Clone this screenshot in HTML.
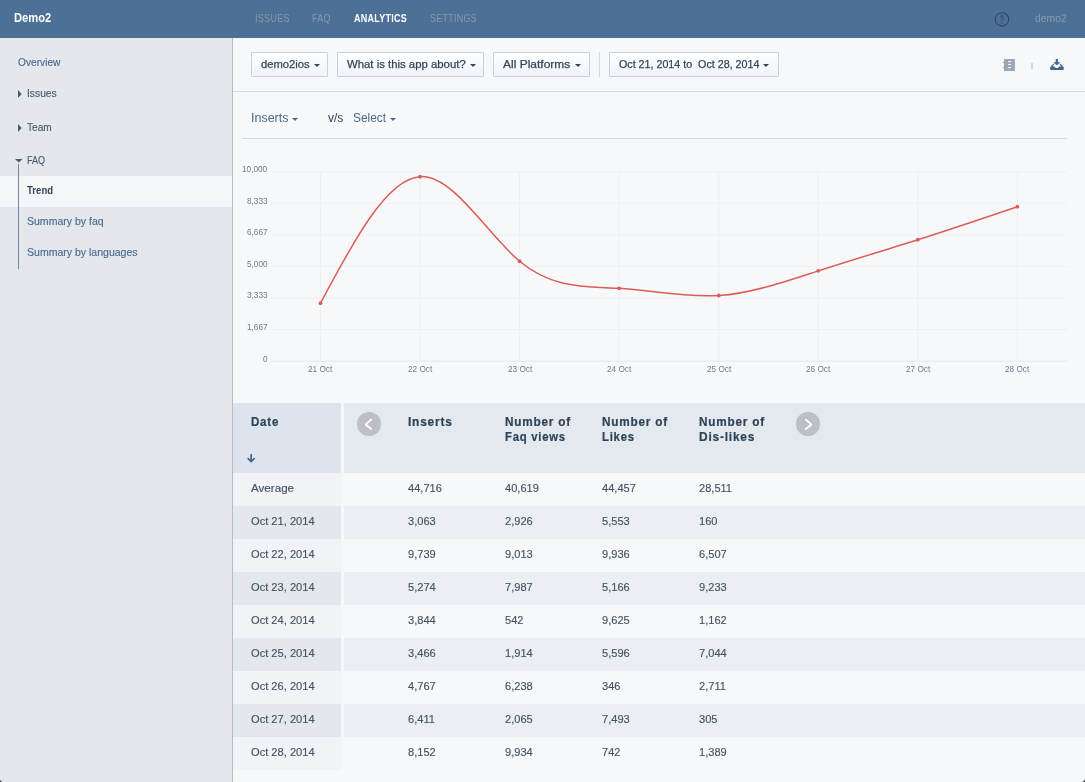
<!DOCTYPE html>
<html><head><meta charset="utf-8"><title>Demo2 Analytics</title>
<style>
html,body{margin:0;padding:0;}
body{width:1085px;height:782px;position:relative;overflow:hidden;background:#1d3148;font-family:"Liberation Sans", sans-serif;}
#app{position:absolute;left:0;top:0;width:1085px;height:782px;overflow:hidden;background:#f7f8fa;border-radius:0 0 4px 4px;}
.b{position:absolute;display:block;}
.t{position:absolute;display:block;white-space:pre;line-height:1;transform-origin:0 50%;}
.btn{position:absolute;box-sizing:border-box;border:1px solid #c8d1dc;background:linear-gradient(#fdfeff,#f1f4f7);top:52px;height:25px;border-radius:1px;}
</style></head><body>
<div id="app">
<div class="b" style="left:0;top:0;width:1085px;height:37.6px;background:#4d7096"></div>
<div class="b" style="left:0;top:37.6px;width:232px;height:745px;background:#e4e8ed"></div>
<div class="b" style="left:231.8px;top:37.6px;width:1.2px;height:745px;background:#b7bdc6"></div>
<div class="b" style="left:0;top:175.9px;width:231.8px;height:30.7px;background:#f4f6f9"></div>
<div class="b" style="left:18px;top:164px;width:1px;height:104.8px;background:#76859a"></div>
<div class="b" style="left:233px;top:91px;width:852px;height:1.2px;background:#d5dbe3"></div>
<div class="btn" style="left:251px;width:77px"></div>
<div class="btn" style="left:337px;width:147px"></div>
<div class="btn" style="left:493.2px;width:96.6px"></div>
<div class="btn" style="left:609.2px;width:169.8px"></div>
<div class="b" style="left:599px;top:52.4px;width:1px;height:24.2px;background:#d5dbe3"></div>
<div class="b" style="left:242px;top:137.8px;width:825.3px;height:1px;background:#d3d9e1"></div>
<svg class="b" style="left:0;top:0" width="1085" height="400" viewBox="0 0 1085 400"><line x1="270.5" x2="1067.3" y1="171.70" y2="171.70" stroke="#eef0f3" stroke-width="1"/><line x1="270.5" x2="1067.3" y1="203.28" y2="203.28" stroke="#eef0f3" stroke-width="1"/><line x1="270.5" x2="1067.3" y1="234.87" y2="234.87" stroke="#eef0f3" stroke-width="1"/><line x1="270.5" x2="1067.3" y1="266.45" y2="266.45" stroke="#eef0f3" stroke-width="1"/><line x1="270.5" x2="1067.3" y1="298.03" y2="298.03" stroke="#eef0f3" stroke-width="1"/><line x1="270.5" x2="1067.3" y1="329.62" y2="329.62" stroke="#eef0f3" stroke-width="1"/><line x1="270.5" x2="1067.3" y1="361.20" y2="361.20" stroke="#e3e7ec" stroke-width="1"/><line x1="320.50" x2="320.50" y1="171.70" y2="361.20" stroke="#eef0f3" stroke-width="1"/><line x1="420.06" x2="420.06" y1="171.70" y2="361.20" stroke="#eef0f3" stroke-width="1"/><line x1="519.61" x2="519.61" y1="171.70" y2="361.20" stroke="#eef0f3" stroke-width="1"/><line x1="619.17" x2="619.17" y1="171.70" y2="361.20" stroke="#eef0f3" stroke-width="1"/><line x1="718.73" x2="718.73" y1="171.70" y2="361.20" stroke="#eef0f3" stroke-width="1"/><line x1="818.29" x2="818.29" y1="171.70" y2="361.20" stroke="#eef0f3" stroke-width="1"/><line x1="917.84" x2="917.84" y1="171.70" y2="361.20" stroke="#eef0f3" stroke-width="1"/><line x1="1017.40" x2="1017.40" y1="171.70" y2="361.20" stroke="#eef0f3" stroke-width="1"/><path d="M320.50,303.16C353.69,240.83,386.87,178.50,420.06,176.65C453.24,174.79,486.43,233.41,519.61,261.26C552.80,289.11,585.99,286.20,619.17,288.36C652.36,290.51,685.54,297.74,718.73,295.52C751.91,293.30,785.10,281.63,818.29,270.87C851.47,260.10,884.66,250.25,917.84,239.71C951.03,229.17,984.21,217.95,1017.40,206.72" fill="none" stroke="#da5d58" stroke-width="1.5"/><circle cx="320.50" cy="303.16" r="1.9" fill="#da5d58"/><circle cx="420.06" cy="176.65" r="1.9" fill="#da5d58"/><circle cx="519.61" cy="261.26" r="1.9" fill="#da5d58"/><circle cx="619.17" cy="288.36" r="1.9" fill="#da5d58"/><circle cx="718.73" cy="295.52" r="1.9" fill="#da5d58"/><circle cx="818.29" cy="270.87" r="1.9" fill="#da5d58"/><circle cx="917.84" cy="239.71" r="1.9" fill="#da5d58"/><circle cx="1017.40" cy="206.72" r="1.9" fill="#da5d58"/></svg>
<div class="b" style="left:233px;top:403px;width:108px;height:70px;background:#dde4ed"></div>
<div class="b" style="left:344px;top:403px;width:741px;height:70px;background:#e4e9f0"></div>
<div class="b" style="left:233px;top:473.00px;width:108px;height:32.97px;background:#f1f3f6"></div><div class="b" style="left:233px;top:505.97px;width:108px;height:32.97px;background:#e4e7ec"></div><div class="b" style="left:344px;top:505.97px;width:741px;height:32.97px;background:#ebeef3"></div><div class="b" style="left:233px;top:538.94px;width:108px;height:32.97px;background:#f1f3f6"></div><div class="b" style="left:233px;top:571.91px;width:108px;height:32.97px;background:#e4e7ec"></div><div class="b" style="left:344px;top:571.91px;width:741px;height:32.97px;background:#ebeef3"></div><div class="b" style="left:233px;top:604.88px;width:108px;height:32.97px;background:#f1f3f6"></div><div class="b" style="left:233px;top:637.85px;width:108px;height:32.97px;background:#e4e7ec"></div><div class="b" style="left:344px;top:637.85px;width:741px;height:32.97px;background:#ebeef3"></div><div class="b" style="left:233px;top:670.82px;width:108px;height:32.97px;background:#f1f3f6"></div><div class="b" style="left:233px;top:703.79px;width:108px;height:32.97px;background:#e4e7ec"></div><div class="b" style="left:344px;top:703.79px;width:741px;height:32.97px;background:#ebeef3"></div><div class="b" style="left:233px;top:736.76px;width:108px;height:32.97px;background:#f1f3f6"></div>
<svg class="b" style="left:18px;top:90.1px" width="4" height="8" viewBox="0 0 4 8"><path d="M0 0L3.6 4L0 8Z" fill="#4b5a6b"/></svg><svg class="b" style="left:18px;top:123.9px" width="4" height="8" viewBox="0 0 4 8"><path d="M0 0L3.6 4L0 8Z" fill="#4b5a6b"/></svg><svg class="b" style="left:14.6px;top:159px" width="8" height="4" viewBox="0 0 8 4"><path d="M0 0H7.6L3.8 3.4Z" fill="#4b5a6b"/></svg><svg class="b" style="left:314.3px;top:64.0px" width="6" height="3" viewBox="0 0 6 3"><path d="M0 0H6L3.0 3Z" fill="#34465c"/></svg><svg class="b" style="left:470.4px;top:64.0px" width="6" height="3" viewBox="0 0 6 3"><path d="M0 0H6L3.0 3Z" fill="#34465c"/></svg><svg class="b" style="left:575.3px;top:64.0px" width="6" height="3" viewBox="0 0 6 3"><path d="M0 0H6L3.0 3Z" fill="#34465c"/></svg><svg class="b" style="left:763.2px;top:64.0px" width="6" height="3" viewBox="0 0 6 3"><path d="M0 0H6L3.0 3Z" fill="#34465c"/></svg><svg class="b" style="left:292.4px;top:118.2px" width="6" height="3" viewBox="0 0 6 3"><path d="M0 0H6L3.0 3Z" fill="#4a6a8e"/></svg><svg class="b" style="left:390.4px;top:118.2px" width="6" height="3" viewBox="0 0 6 3"><path d="M0 0H6L3.0 3Z" fill="#4a6a8e"/></svg>
<svg class="b" style="left:993px;top:10px" width="18" height="19" viewBox="0 0 18 19"><circle cx="8.95" cy="9.4" r="6.7" fill="none" stroke="#34475d" stroke-width="1.1"/></svg><svg class="b" style="left:1002px;top:58px" width="14" height="14" viewBox="0 0 14 14"><path d="M2 1H12.9V12.9H2V10.1H0.9V9.1H2V5.1H0.9V4.1H2Z" fill="#9ca7b6"/><path d="M6.1 3.6H9.1M6.1 6.5H9.1M6.1 9.6H9.1" stroke="#f7f8fa" stroke-width="1"/></svg><div class="b" style="left:1031px;top:63px;width:2px;height:5.8px;background:#ced7e2"></div><svg class="b" style="left:1050px;top:59px" width="14" height="11" viewBox="0 0 14 11"><path d="M5.7 0H7.9V3.2H10.4L6.8 6.3L3.3 3.2H5.7Z" fill="#3f6792"/><path d="M0.2 8.2L3.3 4.7H4.6L2.5 7.5H4.7L5.6 8.9H8.1L9 7.5H11.2L9.1 4.7H10.4L13.7 8.2V10.3Q13.7 11 13 11H0.9Q0.2 11 0.2 10.3Z" fill="#3f6792"/></svg><svg class="b" style="left:356.0px;top:410.85px" width="26" height="26" viewBox="0 0 26 26"><circle cx="13" cy="13" r="12" fill="#bcbfc5"/><path d="M15.2 8.6L9.6 13.4L15.2 18" fill="none" stroke="#fff" stroke-width="1.9" stroke-linecap="round" stroke-linejoin="round"/></svg><svg class="b" style="left:795.0px;top:410.85px" width="26" height="26" viewBox="0 0 26 26"><circle cx="13" cy="13" r="12" fill="#bcbfc5"/><path d="M10.8 8.6L16.4 13.4L10.8 18" fill="none" stroke="#fff" stroke-width="1.9" stroke-linecap="round" stroke-linejoin="round"/></svg><svg class="b" style="left:246px;top:453px" width="11" height="10" viewBox="0 0 11 10"><path d="M5.15 1V8.2M1.7 5.1L5.15 8.5L8.6 5.1" fill="none" stroke="#3f6792" stroke-width="1.7" stroke-linejoin="miter"/></svg>
<div class="b" style="left:0;top:0;width:1085px;height:782px;will-change:transform"><span class="t" style="left:13.80px;top:11.30px;font-size:13px;color:#ffffff;transform:scaleX(0.8603);font-weight:bold;">Demo2</span><span class="t" style="left:254.50px;top:13.21px;font-size:10.5px;color:#8799ae;transform:scaleX(0.8644);letter-spacing:0.3px;">ISSUES</span><span class="t" style="left:312.20px;top:13.21px;font-size:10.5px;color:#8799ae;transform:scaleX(0.8470);letter-spacing:0.3px;">FAQ</span><span class="t" style="left:353.50px;top:13.21px;font-size:10.5px;color:#ffffff;transform:scaleX(0.8565);font-weight:bold;letter-spacing:0.3px;">ANALYTICS</span><span class="t" style="left:429.50px;top:13.21px;font-size:10.5px;color:#8799ae;transform:scaleX(0.8534);letter-spacing:0.3px;">SETTINGS</span><span class="t" style="left:1035.30px;top:13.01px;font-size:10.5px;color:#8b9bb0;transform:scaleX(0.9904);">demo2</span><span class="t" style="left:1000.00px;top:13.74px;font-size:12px;color:#3a4c61;transform:scaleX(0.5311);font-weight:bold;">?</span><span class="t" style="left:18.40px;top:57.21px;font-size:10.5px;color:#4a6a8e;transform:scaleX(0.9688);-webkit-text-stroke:0.15px currentColor;">Overview</span><span class="t" style="left:27.40px;top:88.21px;font-size:10.5px;color:#4b5a6b;transform:scaleX(0.9783);-webkit-text-stroke:0.15px currentColor;">Issues</span><span class="t" style="left:27.40px;top:122.31px;font-size:10.5px;color:#4b5a6b;transform:scaleX(0.9655);-webkit-text-stroke:0.15px currentColor;">Team</span><span class="t" style="left:27.40px;top:155.01px;font-size:10.5px;color:#4b5a6b;transform:scaleX(0.8565);-webkit-text-stroke:0.15px currentColor;">FAQ</span><span class="t" style="left:27.40px;top:184.91px;font-size:10.5px;color:#34465c;transform:scaleX(0.9128);font-weight:bold;">Trend</span><span class="t" style="left:27.40px;top:215.91px;font-size:10.5px;color:#4a6a8e;transform:scaleX(1.0019);-webkit-text-stroke:0.15px currentColor;">Summary by faq</span><span class="t" style="left:27.40px;top:246.91px;font-size:10.5px;color:#4a6a8e;transform:scaleX(1.0026);-webkit-text-stroke:0.15px currentColor;">Summary by languages</span><span class="t" style="left:260.60px;top:58.59px;font-size:11px;color:#34465c;transform:scaleX(1.0188);-webkit-text-stroke:0.25px #34465c;">demo2ios</span><span class="t" style="left:347.10px;top:58.59px;font-size:11px;color:#34465c;transform:scaleX(1.0325);-webkit-text-stroke:0.25px #34465c;">What is this app about?</span><span class="t" style="left:503.30px;top:58.59px;font-size:11px;color:#34465c;transform:scaleX(1.0899);-webkit-text-stroke:0.25px #34465c;">All Platforms</span><span class="t" style="left:619.20px;top:58.59px;font-size:11px;color:#34465c;transform:scaleX(0.9728);-webkit-text-stroke:0.25px #34465c;">Oct 21, 2014 to  Oct 28, 2014</span><span class="t" style="left:250.80px;top:112.24px;font-size:12px;color:#4a6a8e;transform:scaleX(1.0412);">Inserts</span><span class="t" style="left:328.30px;top:112.24px;font-size:12px;color:#34465c;transform:scaleX(1.0037);">v/s</span><span class="t" style="left:353.30px;top:112.24px;font-size:12px;color:#4a6a8e;transform:scaleX(0.9892);">Select</span><span class="t" style="left:242.14px;top:165.11px;font-size:9.2px;color:#6f7b8b;transform:scaleX(0.8950);">10,000</span><span class="t" style="left:246.72px;top:196.70px;font-size:9.2px;color:#6f7b8b;transform:scaleX(0.8950);">8,333</span><span class="t" style="left:246.72px;top:228.28px;font-size:9.2px;color:#6f7b8b;transform:scaleX(0.8950);">6,667</span><span class="t" style="left:246.72px;top:259.86px;font-size:9.2px;color:#6f7b8b;transform:scaleX(0.8950);">5,000</span><span class="t" style="left:246.72px;top:291.45px;font-size:9.2px;color:#6f7b8b;transform:scaleX(0.8950);">3,333</span><span class="t" style="left:246.72px;top:323.03px;font-size:9.2px;color:#6f7b8b;transform:scaleX(0.8950);">1,667</span><span class="t" style="left:262.71px;top:354.61px;font-size:9.2px;color:#6f7b8b;transform:scaleX(0.8950);">0</span><span class="t" style="left:308.38px;top:364.51px;font-size:9.2px;color:#6f7b8b;transform:scaleX(0.8950);">21 Oct</span><span class="t" style="left:407.94px;top:364.51px;font-size:9.2px;color:#6f7b8b;transform:scaleX(0.8950);">22 Oct</span><span class="t" style="left:507.50px;top:364.51px;font-size:9.2px;color:#6f7b8b;transform:scaleX(0.8950);">23 Oct</span><span class="t" style="left:607.05px;top:364.51px;font-size:9.2px;color:#6f7b8b;transform:scaleX(0.8950);">24 Oct</span><span class="t" style="left:706.61px;top:364.51px;font-size:9.2px;color:#6f7b8b;transform:scaleX(0.8950);">25 Oct</span><span class="t" style="left:806.17px;top:364.51px;font-size:9.2px;color:#6f7b8b;transform:scaleX(0.8950);">26 Oct</span><span class="t" style="left:905.73px;top:364.51px;font-size:9.2px;color:#6f7b8b;transform:scaleX(0.8950);">27 Oct</span><span class="t" style="left:1005.28px;top:364.51px;font-size:9.2px;color:#6f7b8b;transform:scaleX(0.8950);">28 Oct</span><span class="t" style="left:250.80px;top:415.94px;font-size:12px;color:#2e4257;transform:scaleX(0.9606);font-weight:bold;letter-spacing:0.8px;-webkit-text-stroke:0.2px #2e4257;">Date</span><span class="t" style="left:407.70px;top:415.94px;font-size:12px;color:#2e4257;transform:scaleX(0.9920);font-weight:bold;letter-spacing:0.8px;-webkit-text-stroke:0.2px #2e4257;">Inserts</span><span class="t" style="left:504.70px;top:415.94px;font-size:12px;color:#2e4257;transform:scaleX(0.9819);font-weight:bold;letter-spacing:0.8px;-webkit-text-stroke:0.2px #2e4257;">Number of</span><span class="t" style="left:504.70px;top:430.74px;font-size:12px;color:#2e4257;transform:scaleX(0.9426);font-weight:bold;letter-spacing:0.8px;-webkit-text-stroke:0.2px #2e4257;">Faq views</span><span class="t" style="left:601.80px;top:415.94px;font-size:12px;color:#2e4257;transform:scaleX(0.9819);font-weight:bold;letter-spacing:0.8px;-webkit-text-stroke:0.2px #2e4257;">Number of</span><span class="t" style="left:601.80px;top:430.74px;font-size:12px;color:#2e4257;transform:scaleX(0.9473);font-weight:bold;letter-spacing:0.8px;-webkit-text-stroke:0.2px #2e4257;">Likes</span><span class="t" style="left:698.80px;top:415.94px;font-size:12px;color:#2e4257;transform:scaleX(0.9819);font-weight:bold;letter-spacing:0.8px;-webkit-text-stroke:0.2px #2e4257;">Number of</span><span class="t" style="left:698.80px;top:430.74px;font-size:12px;color:#2e4257;transform:scaleX(0.9935);font-weight:bold;letter-spacing:0.8px;-webkit-text-stroke:0.2px #2e4257;">Dis-likes</span><span class="t" style="left:250.90px;top:483.07px;font-size:11.5px;color:#465260;transform:scaleX(1.0108);-webkit-text-stroke:0.15px #465260;">Average</span><span class="t" style="left:407.70px;top:483.07px;font-size:11.5px;color:#465260;transform:scaleX(0.9620);-webkit-text-stroke:0.15px #465260;">44,716</span><span class="t" style="left:504.73px;top:483.07px;font-size:11.5px;color:#465260;transform:scaleX(0.9620);-webkit-text-stroke:0.15px #465260;">40,619</span><span class="t" style="left:601.76px;top:483.07px;font-size:11.5px;color:#465260;transform:scaleX(0.9620);-webkit-text-stroke:0.15px #465260;">44,457</span><span class="t" style="left:698.79px;top:483.07px;font-size:11.5px;color:#465260;transform:scaleX(0.9620);-webkit-text-stroke:0.15px #465260;">28,511</span><span class="t" style="left:250.90px;top:516.04px;font-size:11.5px;color:#465260;transform:scaleX(0.9657);-webkit-text-stroke:0.15px #465260;">Oct 21, 2014</span><span class="t" style="left:407.70px;top:516.04px;font-size:11.5px;color:#465260;transform:scaleX(0.9620);-webkit-text-stroke:0.15px #465260;">3,063</span><span class="t" style="left:504.73px;top:516.04px;font-size:11.5px;color:#465260;transform:scaleX(0.9620);-webkit-text-stroke:0.15px #465260;">2,926</span><span class="t" style="left:601.76px;top:516.04px;font-size:11.5px;color:#465260;transform:scaleX(0.9620);-webkit-text-stroke:0.15px #465260;">5,553</span><span class="t" style="left:698.79px;top:516.04px;font-size:11.5px;color:#465260;transform:scaleX(0.9620);-webkit-text-stroke:0.15px #465260;">160</span><span class="t" style="left:250.90px;top:549.01px;font-size:11.5px;color:#465260;transform:scaleX(0.9657);-webkit-text-stroke:0.15px #465260;">Oct 22, 2014</span><span class="t" style="left:407.70px;top:549.01px;font-size:11.5px;color:#465260;transform:scaleX(0.9620);-webkit-text-stroke:0.15px #465260;">9,739</span><span class="t" style="left:504.73px;top:549.01px;font-size:11.5px;color:#465260;transform:scaleX(0.9620);-webkit-text-stroke:0.15px #465260;">9,013</span><span class="t" style="left:601.76px;top:549.01px;font-size:11.5px;color:#465260;transform:scaleX(0.9620);-webkit-text-stroke:0.15px #465260;">9,936</span><span class="t" style="left:698.79px;top:549.01px;font-size:11.5px;color:#465260;transform:scaleX(0.9620);-webkit-text-stroke:0.15px #465260;">6,507</span><span class="t" style="left:250.90px;top:581.98px;font-size:11.5px;color:#465260;transform:scaleX(0.9657);-webkit-text-stroke:0.15px #465260;">Oct 23, 2014</span><span class="t" style="left:407.70px;top:581.98px;font-size:11.5px;color:#465260;transform:scaleX(0.9620);-webkit-text-stroke:0.15px #465260;">5,274</span><span class="t" style="left:504.73px;top:581.98px;font-size:11.5px;color:#465260;transform:scaleX(0.9620);-webkit-text-stroke:0.15px #465260;">7,987</span><span class="t" style="left:601.76px;top:581.98px;font-size:11.5px;color:#465260;transform:scaleX(0.9620);-webkit-text-stroke:0.15px #465260;">5,166</span><span class="t" style="left:698.79px;top:581.98px;font-size:11.5px;color:#465260;transform:scaleX(0.9620);-webkit-text-stroke:0.15px #465260;">9,233</span><span class="t" style="left:250.90px;top:614.95px;font-size:11.5px;color:#465260;transform:scaleX(0.9657);-webkit-text-stroke:0.15px #465260;">Oct 24, 2014</span><span class="t" style="left:407.70px;top:614.95px;font-size:11.5px;color:#465260;transform:scaleX(0.9620);-webkit-text-stroke:0.15px #465260;">3,844</span><span class="t" style="left:504.73px;top:614.95px;font-size:11.5px;color:#465260;transform:scaleX(0.9620);-webkit-text-stroke:0.15px #465260;">542</span><span class="t" style="left:601.76px;top:614.95px;font-size:11.5px;color:#465260;transform:scaleX(0.9620);-webkit-text-stroke:0.15px #465260;">9,625</span><span class="t" style="left:698.79px;top:614.95px;font-size:11.5px;color:#465260;transform:scaleX(0.9620);-webkit-text-stroke:0.15px #465260;">1,162</span><span class="t" style="left:250.90px;top:647.92px;font-size:11.5px;color:#465260;transform:scaleX(0.9657);-webkit-text-stroke:0.15px #465260;">Oct 25, 2014</span><span class="t" style="left:407.70px;top:647.92px;font-size:11.5px;color:#465260;transform:scaleX(0.9620);-webkit-text-stroke:0.15px #465260;">3,466</span><span class="t" style="left:504.73px;top:647.92px;font-size:11.5px;color:#465260;transform:scaleX(0.9620);-webkit-text-stroke:0.15px #465260;">1,914</span><span class="t" style="left:601.76px;top:647.92px;font-size:11.5px;color:#465260;transform:scaleX(0.9620);-webkit-text-stroke:0.15px #465260;">5,596</span><span class="t" style="left:698.79px;top:647.92px;font-size:11.5px;color:#465260;transform:scaleX(0.9620);-webkit-text-stroke:0.15px #465260;">7,044</span><span class="t" style="left:250.90px;top:680.89px;font-size:11.5px;color:#465260;transform:scaleX(0.9657);-webkit-text-stroke:0.15px #465260;">Oct 26, 2014</span><span class="t" style="left:407.70px;top:680.89px;font-size:11.5px;color:#465260;transform:scaleX(0.9620);-webkit-text-stroke:0.15px #465260;">4,767</span><span class="t" style="left:504.73px;top:680.89px;font-size:11.5px;color:#465260;transform:scaleX(0.9620);-webkit-text-stroke:0.15px #465260;">6,238</span><span class="t" style="left:601.76px;top:680.89px;font-size:11.5px;color:#465260;transform:scaleX(0.9620);-webkit-text-stroke:0.15px #465260;">346</span><span class="t" style="left:698.79px;top:680.89px;font-size:11.5px;color:#465260;transform:scaleX(0.9620);-webkit-text-stroke:0.15px #465260;">2,711</span><span class="t" style="left:250.90px;top:713.86px;font-size:11.5px;color:#465260;transform:scaleX(0.9657);-webkit-text-stroke:0.15px #465260;">Oct 27, 2014</span><span class="t" style="left:407.70px;top:713.86px;font-size:11.5px;color:#465260;transform:scaleX(0.9620);-webkit-text-stroke:0.15px #465260;">6,411</span><span class="t" style="left:504.73px;top:713.86px;font-size:11.5px;color:#465260;transform:scaleX(0.9620);-webkit-text-stroke:0.15px #465260;">2,065</span><span class="t" style="left:601.76px;top:713.86px;font-size:11.5px;color:#465260;transform:scaleX(0.9620);-webkit-text-stroke:0.15px #465260;">7,493</span><span class="t" style="left:698.79px;top:713.86px;font-size:11.5px;color:#465260;transform:scaleX(0.9620);-webkit-text-stroke:0.15px #465260;">305</span><span class="t" style="left:250.90px;top:746.83px;font-size:11.5px;color:#465260;transform:scaleX(0.9657);-webkit-text-stroke:0.15px #465260;">Oct 28, 2014</span><span class="t" style="left:407.70px;top:746.83px;font-size:11.5px;color:#465260;transform:scaleX(0.9620);-webkit-text-stroke:0.15px #465260;">8,152</span><span class="t" style="left:504.73px;top:746.83px;font-size:11.5px;color:#465260;transform:scaleX(0.9620);-webkit-text-stroke:0.15px #465260;">9,934</span><span class="t" style="left:601.76px;top:746.83px;font-size:11.5px;color:#465260;transform:scaleX(0.9620);-webkit-text-stroke:0.15px #465260;">742</span><span class="t" style="left:698.79px;top:746.83px;font-size:11.5px;color:#465260;transform:scaleX(0.9620);-webkit-text-stroke:0.15px #465260;">1,389</span></div>
</div>
</body></html>
